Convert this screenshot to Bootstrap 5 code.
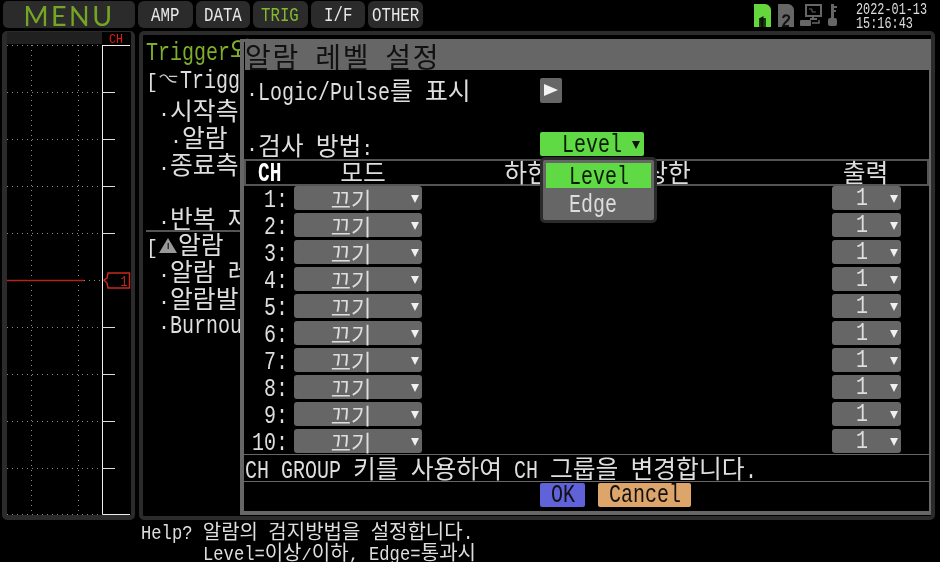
<!DOCTYPE html>
<html lang="ko">
<head>
<meta charset="utf-8">
<title>알람 레벨 설정</title>
<link href="https://cdn.jsdelivr.net/npm/bootstrap@5.3.0/dist/css/bootstrap.min.css" rel="stylesheet">
<style>
html,body{height:100%;}
body{background:#000;color:#e2e2e2;width:940px;height:562px;overflow:hidden;font-family:"Liberation Mono","Noto Sans CJK KR",monospace;font-size:20px;line-height:27px;position:relative;filter:blur(.35px);}
.ko{font-family:"Noto Sans CJK KR",sans-serif;font-size:24.8px;}
.lat{--sx:.8;display:inline-block;font-size:25px;line-height:1;white-space:nowrap;transform:scaleX(var(--sx));transform-origin:0 50%;width:calc(var(--n)*var(--sx)*1ch);text-align:left;}
.c1{--n:1}.c2{--n:2}.c3{--n:3}.c4{--n:4}.c5{--n:5}.c6{--n:6}.c7{--n:7}.c8{--n:8}.c10{--n:10}.c11{--n:11}
.topbar{height:31px;padding:1px 3px 0 3px;gap:3px;}
.menu-tab{width:132px;height:27px;background:#2b2b2b;border-radius:5px;color:#76a426;font-family:"Lato",sans-serif;font-size:27px;font-weight:400;letter-spacing:2.5px;line-height:29px;text-align:center;}
.tab-btn{width:54.5px;height:27px;background:#2b2b2b;border-radius:6px;color:#e8e8e8;padding-top:2px;}
.tab-btn .lat{--sx:.75;font-size:21px;}
.tab-btn.on{color:#86b82f;}
.status-zone{gap:5px;margin-right:10px;height:28px;}
.status-zone svg{margin-top:2px;flex:none;}
.clock{margin-left:13px;margin-top:1px;color:#ddd;}
.clock-line{height:14px;line-height:14px;display:flex;}
.clock .lat{--sx:.74;font-size:16px;}
.work{height:489px;gap:4px;padding-left:2px;}
.scope-pane{width:133px;height:489px;background:#000;border:5px solid #2b2b2b;border-top-width:1px;border-right-width:4px;border-radius:5px;flex:none;position:relative;overflow:hidden;}
.scope-pane svg{display:block;}
.list-pane{width:796px;height:489px;border:4px solid #2b2b2b;border-radius:5px;flex:none;position:relative;overflow:hidden;padding:0 0 0 3px;color:#dedede;}
.list-head{color:#7fae2b;line-height:28px;height:34px;white-space:nowrap;}
.list-line{height:27px;white-space:nowrap;}
.lat-line{padding-top:3px;}
.ind1{padding-left:12px;}
.ind2{padding-left:24px;}
.split{border-top:2px solid #555;margin-bottom:-2px;width:100%;margin-top:-1px;}
.dlg{position:absolute;left:97px;top:4px;width:693px;height:476px;background:#000;border:4px solid #666;border-top-width:3px;}
.dlg-title{height:28px;background:#666;color:#111;line-height:28px;word-spacing:3px;white-space:nowrap;margin-left:1px;}
.dlg-title .ko{font-size:28px;letter-spacing:1.8px;}
.opt-row{position:relative;height:27px;padding-left:2px;line-height:25px;}
.dlg-body{padding-top:7px;height:89px;}
.opt-gap{margin-top:27px;line-height:27px;}
.play-btn{position:absolute;left:296px;top:1px;width:22px;height:25px;background:#666;border-radius:2px;}
.play-btn::after{content:"";position:absolute;left:4px;top:6px;border-left:14px solid #f2f2f2;border-top:6.5px solid transparent;border-bottom:6.5px solid transparent;}
.green-select{position:absolute;left:296px;top:1px;width:104px;height:24px;background:#5fd944;border-radius:2px;color:#061a00;display:flex;justify-content:center;align-items:center;padding:2px 1px 0 0;}
.green-select::after{content:"";position:absolute;right:4px;top:9px;border-top:8px solid #111;border-left:4px solid transparent;border-right:4px solid transparent;}
.ch-head{display:grid;grid-template-columns:48px 138px 190px 92px 90px 1fr;height:27px;border:solid #555;border-width:2px;text-align:center;line-height:20px;}
.ch-mark{font-weight:700;color:#fff;display:flex;justify-content:center;align-items:center;padding-bottom:2px;}
.ch-mark .lat{--sx:.72;font-size:27px;}
.ch-row{height:27px;padding-right:28px;}
.ch-row:first-child{margin-top:-1px;}
.ch-no{width:47px;flex:none;display:flex;justify-content:flex-end;padding:3px 3px 0 0;line-height:27px;}
.drop{position:relative;height:24px;background:#666;border-radius:3px;color:#dedede;flex:none;margin-top:1px;display:flex;justify-content:center;align-items:center;}
.drop .ko{font-size:22px;line-height:22px;}
.drop::after{content:"";position:absolute;right:3px;top:9px;border-top:8px solid #f0f0f0;border-left:4px solid transparent;border-right:4px solid transparent;}
.drop-mode{width:128px;margin-left:3px;padding-right:14px;}
.drop-out{width:69px;padding-right:9px;}
.dlg-msg{height:28px;border:solid #666;border-width:1px 0;line-height:24px;white-space:nowrap;padding-left:1px;margin-top:-1px;}
.dlg-foot{gap:13px;padding-top:1px;padding-left:296px;}
.act-btn{height:24px;border-radius:2px;color:#111;display:flex;justify-content:center;align-items:center;}
.act-ok{width:45px;background:#5f62d8;}
.act-cancel{width:93px;background:#dda56a;}
.popup{position:absolute;left:296px;top:115px;width:117px;height:66px;background:#666;border:3px solid #2b2b2b;border-radius:5px;padding:3px 3px;}
.popup-on{height:25px;background:#5fd944;color:#061a00;display:flex;justify-content:center;align-items:center;padding:3px 0 0 1px;}
.popup-off{height:29px;color:#ddd;padding:5px 0 0 23px;}
.help{font-size:17.2px;padding:0 0 0 141px;color:#dedede;}
.help-line{height:21px;line-height:21px;white-space:pre;}
.help .ko{font-size:20px;}
.help .lat{--sx:.858;font-size:20px;}
</style>
</head>
<body>
<div class="topbar d-flex align-items-start">
  <div class="menu-tab">MENU</div>
  <div class="tab-btn d-flex justify-content-center align-items-center"><span class="lat c3">AMP</span></div>
  <div class="tab-btn d-flex justify-content-center align-items-center"><span class="lat c4">DATA</span></div>
  <div class="tab-btn d-flex justify-content-center align-items-center on"><span class="lat c4">TRIG</span></div>
  <div class="tab-btn d-flex justify-content-center align-items-center"><span class="lat c3">I/F</span></div>
  <div class="tab-btn d-flex justify-content-center align-items-center"><span class="lat c5">OTHER</span></div>
  <div class="status-zone d-flex align-items-start ms-auto">
    <svg width="19" height="24" viewBox="0 0 19 24"><path d="M1 24V1h11c3 0 6 3 6 6v17z" fill="#65d73c"/><path d="M6 24v-9h7v9z" fill="#173d0c"/><path d="M7 15l3.500-2V24H8z" fill="#111"/></svg>
    <svg width="18" height="24" viewBox="0 0 18 24"><path d="M1 24V1h10c3 0 6 3 6 6v17z" fill="#666"/><path d="M6 15c1-4 7-3 6 0-.5 3-5 4-6 8h6" fill="none" stroke="#111" stroke-width="2"/></svg>
    <svg width="22" height="24" viewBox="0 0 22 24"><rect x="6" y="2" width="15" height="11" fill="none" stroke="#666" stroke-width="2"/><path d="M9 6h3v3h4" fill="none" stroke="#666"/><path d="M13 13v3M10 16h7" stroke="#666" stroke-width="2"/><rect x="0" y="17" width="11" height="6" rx="1" fill="#666"/><path d="M12 20h7v-3" fill="none" stroke="#666" stroke-width="1.500"/></svg>
    <svg width="11" height="24" viewBox="0 0 11 24"><path d="M4 1h3v14H4z" fill="#666"/><path d="M7 3h3v2H7zM7 7h2v2H7z" fill="#666"/><rect x="1" y="15" width="9" height="8" rx="2" fill="#666"/></svg>
    <div class="clock"><div class="clock-line"><span class="lat c10">2022-01-13</span></div><div class="clock-line"><span class="lat c8">15:16:43</span></div></div>
  </div>
</div>
<div class="work d-flex">
  <div class="scope-pane">
    <svg width="124" height="483" viewBox="7 32 124 483">
      <rect x="7" y="32" width="95" height="12" fill="#202020"/>
      <g stroke="#8a8a8a" stroke-width="1" stroke-dasharray="1 4" fill="none">
        <path d="M7 45.500H102M7 92.500H102M7 139.500H102M7 186.500H102M7 233.500H102M7 327.500H102M7 374.500H102M7 421.500H102M7 468.500H102M7 514.500H102"/>
        <path d="M31.500 45V515M78.500 45V515"/>
        <path d="M84 280.500H102"/>
      </g>
      <text x="116" y="43" fill="#e21a10" font-family="Liberation Mono,monospace" font-size="12" text-anchor="middle" textLength="14" lengthAdjust="spacingAndGlyphs">CH</text>
      <path d="M102.500 45V514.500H130M102.500 45.500H130" fill="none" stroke="#eee" stroke-width="1"/>
      <path d="M102 92.500h13M102 139.500h13M102 186.500h13M102 233.500h13M102 327.500h13M102 374.500h13M102 421.500h13M102 468.500h13" stroke="#ddd" stroke-width="1"/>
      <path d="M7 280.500H84" stroke="#b3241a" stroke-width="1.500"/>
      <path d="M104 280l3-2 1-5h21.500v15H108l-1-5z" fill="#000" stroke="#c62a1c" stroke-width="1.500"/>
      <text x="124" y="286" fill="#c62a1c" font-family="Liberation Mono,monospace" font-size="15" text-anchor="middle" textLength="7" lengthAdjust="spacingAndGlyphs">1</text>
    </svg>
  </div>
  <div class="list-pane">
    <div class="list-head"><span class="lat c7">Trigger</span><span class="ko">와</span></div>
    <div class="list-line">[<svg width="22" height="16" viewBox="0 0 24 16" class="align-baseline"><path d="M2 5c3-4 6-3 8 0 2 3 5 6 10 5M12 4h9" fill="none" stroke="#ccc" stroke-width="1.500"/></svg><span class="lat c5">Trigg</span></div>
    <div class="list-line ind1">·<span class="ko">시작측</span></div>
    <div class="list-line ind2">·<span class="ko">알람</span></div>
    <div class="list-line ind1">·<span class="ko">종료측</span></div>
    <div class="list-line"></div>
    <div class="list-line ind1">·<span class="ko">반복</span> <span class="ko">재</span></div>
    <div class="split"></div>
    <div class="list-line">[<svg width="20" height="17" viewBox="0 0 20 17" class="align-baseline"><path d="M10 1l9 15H1z" fill="#999"/><path d="M9.500 6h1.500v6H9.500z" fill="#333"/></svg><span class="ko">알람</span></div>
    <div class="list-line ind1">·<span class="ko">알람</span> <span class="ko">레</span></div>
    <div class="list-line ind1">·<span class="ko">알람발</span></div>
    <div class="list-line lat-line ind1">·<span class="lat c6">Burnou</span></div>
    <div class="dlg">
      <div class="dlg-title"><span class="ko">알람</span> <span class="ko">레벨</span> <span class="ko">설정</span></div>
      <div class="dlg-body">
        <div class="opt-row">·<span class="lat c11">Logic/Pulse</span><span class="ko">를</span> <span class="ko">표시</span><span class="play-btn"></span></div>
        <div class="opt-row opt-gap">·<span class="ko">검사</span> <span class="ko">방법</span>:<span class="green-select"><span class="lat c5">Level</span></span></div>
      </div>
      <div class="ch-head">
        <div class="ch-mark"><span class="lat c2">CH</span></div><div class="ko">모드</div><div class="ko">하한</div><div class="ko">상한</div><div></div><div class="ko">출력</div>
      </div>
      <div class="ch-grid">
        <div class="ch-row d-flex justify-content-between"><div class="d-flex"><div class="ch-no"><span class="lat c2">1:</span></div><div class="drop drop-mode"><span class="ko">끄기</span></div></div><div class="drop drop-out"><span class="lat c1">1</span></div></div>
        <div class="ch-row d-flex justify-content-between"><div class="d-flex"><div class="ch-no"><span class="lat c2">2:</span></div><div class="drop drop-mode"><span class="ko">끄기</span></div></div><div class="drop drop-out"><span class="lat c1">1</span></div></div>
        <div class="ch-row d-flex justify-content-between"><div class="d-flex"><div class="ch-no"><span class="lat c2">3:</span></div><div class="drop drop-mode"><span class="ko">끄기</span></div></div><div class="drop drop-out"><span class="lat c1">1</span></div></div>
        <div class="ch-row d-flex justify-content-between"><div class="d-flex"><div class="ch-no"><span class="lat c2">4:</span></div><div class="drop drop-mode"><span class="ko">끄기</span></div></div><div class="drop drop-out"><span class="lat c1">1</span></div></div>
        <div class="ch-row d-flex justify-content-between"><div class="d-flex"><div class="ch-no"><span class="lat c2">5:</span></div><div class="drop drop-mode"><span class="ko">끄기</span></div></div><div class="drop drop-out"><span class="lat c1">1</span></div></div>
        <div class="ch-row d-flex justify-content-between"><div class="d-flex"><div class="ch-no"><span class="lat c2">6:</span></div><div class="drop drop-mode"><span class="ko">끄기</span></div></div><div class="drop drop-out"><span class="lat c1">1</span></div></div>
        <div class="ch-row d-flex justify-content-between"><div class="d-flex"><div class="ch-no"><span class="lat c2">7:</span></div><div class="drop drop-mode"><span class="ko">끄기</span></div></div><div class="drop drop-out"><span class="lat c1">1</span></div></div>
        <div class="ch-row d-flex justify-content-between"><div class="d-flex"><div class="ch-no"><span class="lat c2">8:</span></div><div class="drop drop-mode"><span class="ko">끄기</span></div></div><div class="drop drop-out"><span class="lat c1">1</span></div></div>
        <div class="ch-row d-flex justify-content-between"><div class="d-flex"><div class="ch-no"><span class="lat c2">9:</span></div><div class="drop drop-mode"><span class="ko">끄기</span></div></div><div class="drop drop-out"><span class="lat c1">1</span></div></div>
        <div class="ch-row d-flex justify-content-between"><div class="d-flex"><div class="ch-no"><span class="lat c3">10:</span></div><div class="drop drop-mode"><span class="ko">끄기</span></div></div><div class="drop drop-out"><span class="lat c1">1</span></div></div>
      </div>
      <div class="dlg-msg"><span class="lat c2">CH</span> <span class="lat c5">GROUP</span> <span class="ko">키를</span> <span class="ko">사용하여</span> <span class="lat c2">CH</span> <span class="ko">그룹을</span> <span class="ko">변경합니다</span><span class="lat c1">.</span></div>
      <div class="dlg-foot d-flex"><div class="act-btn act-ok"><span class="lat c2">OK</span></div><div class="act-btn act-cancel"><span class="lat c6">Cancel</span></div></div>
      <div class="popup"><div class="popup-on"><span class="lat c5">Level</span></div><div class="popup-off"><span class="lat c4">Edge</span></div></div>
    </div>
  </div>
</div>
<div class="help"><div class="help-line"><span class="lat c5">Help?</span> <span class="ko">알람의</span> <span class="ko">검지방법을</span> <span class="ko">설정합니다</span><span class="lat c1">.</span></div><div class="help-line">      <span class="lat c6">Level=</span><span class="ko">이상</span>/<span class="ko">이하</span>, <span class="lat c5">Edge=</span><span class="ko">통과시</span></div></div>
<script src="https://cdn.jsdelivr.net/npm/bootstrap@5.3.0/dist/js/bootstrap.bundle.min.js"></script>
</body>
</html>
